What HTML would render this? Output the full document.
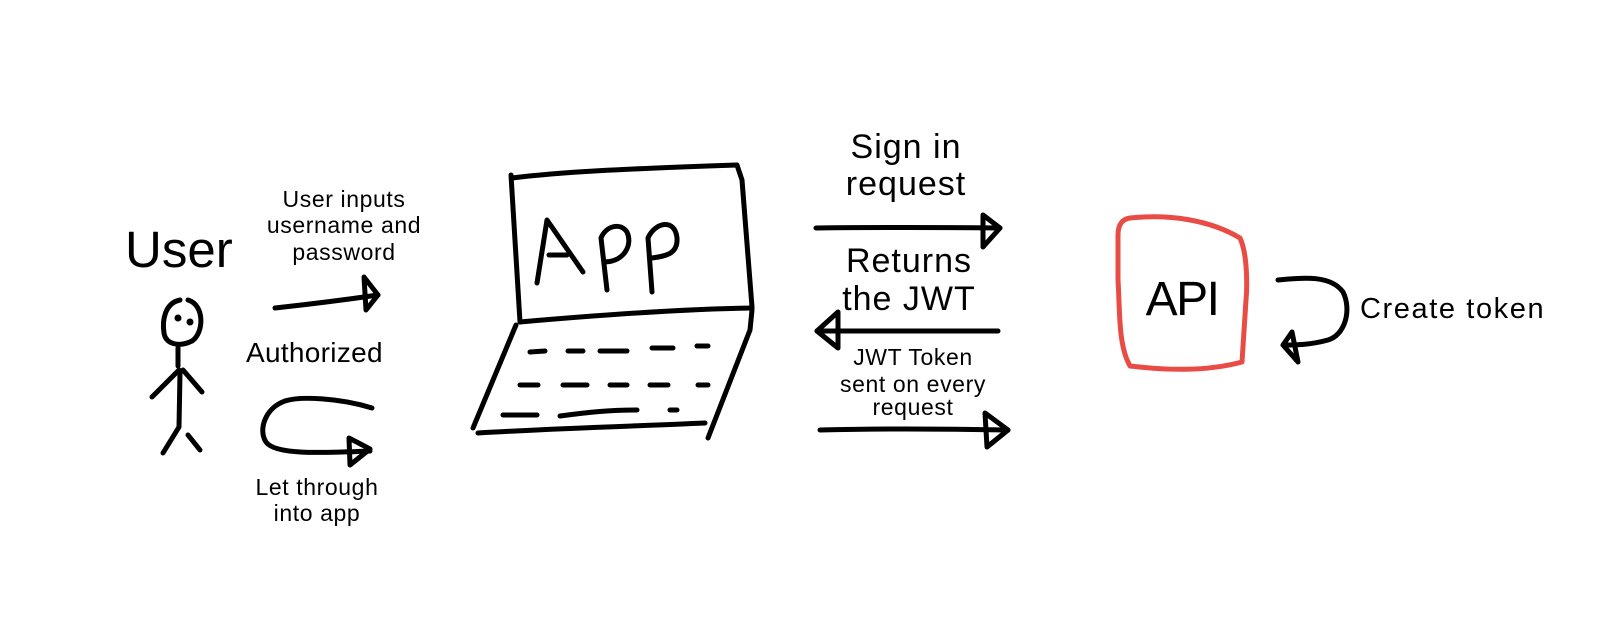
<!DOCTYPE html>
<html><head><meta charset="utf-8"><style>
html,body{margin:0;padding:0;background:#fff;width:1614px;height:628px;overflow:hidden}
svg{display:block}
text{font-family:"Liberation Sans",sans-serif;fill:#000}
</style></head><body>
<svg width="1614" height="628" viewBox="0 0 1614 628" xmlns="http://www.w3.org/2000/svg">
<g fill="none" stroke="#000" stroke-width="5" stroke-linecap="round" stroke-linejoin="round">
<!-- stick figure -->
<path d="M180,300 C165,303 162,320 164,333 C166,345 180,347 192,341 C204,333 205,305 188,300"/>
<path d="M178,348 L178,366"/>
<path d="M180,373 L179,427 L163,453"/>
<path d="M179,370 L152,397"/>
<path d="M183,370 L202,392"/>
<path d="M188,435 L200,450"/>
<!-- arrow 1 -->
<path d="M275,308 Q330,302 378,295"/>
<path d="M364,277 L378,295 L366,310 Z"/>
<!-- loop arrow -->
<path d="M372,408 C340,398 300,396 285,401 C265,408 258,430 266,442 C275,455 320,453 370,451"/>
<path d="M349,438 L370,449 L350,465 Z"/>
<!-- laptop -->
<path d="M511,175 L520,322"/>
<path d="M512,178 C560,172 620,169 737,165 L742,180 L752,307"/>
<path d="M520,322 C600,315 680,309 752,308"/>
<path d="M516,325 L473,428"/>
<path d="M752,310 L750,330 L708,438"/>
<path d="M478,433 C560,428 640,426 705,423"/>
<!-- APP letters -->
<path d="M537,283 L547,220 L583,272 M549,255 L567,255"/>
<path d="M607,290 L601,238 C606,226 620,222 627,232 C633,245 624,262 604,262"/>
<path d="M652,292 L648,238 C655,222 675,218 677,238 C678,254 666,256 652,258"/>
<!-- keys -->
<path d="M530,352 L545,351 M568,351 L583,351 M600,351 L627,351 M652,348 L673,348 M697,346 L708,346"/>
<path d="M520,385 L538,385 M563,385 L587,385 M610,385 L627,385 M650,385 L668,385 M698,385 L708,385"/>
<path d="M503,415 L537,415 M560,416 C590,412 610,410 637,410 M670,410 L677,410"/>
<!-- right arrows -->
<path d="M816,228 Q900,227 1000,228"/>
<path d="M983,215 L1000,228 L983,247 Z"/>
<path d="M998,331 L817,331"/>
<path d="M838,312 L817,331 L838,348 Z"/>
<path d="M820,430 Q900,428 1008,430"/>
<path d="M985,413 L1008,430 L987,447 Z"/>
<!-- api loop -->
<path d="M1278,280 C1300,278 1330,274 1343,292 C1352,310 1345,335 1328,340 C1310,345 1295,345 1285,345"/>
<path d="M1292,332 L1283,345 L1298,362 Z"/>
</g>
<circle cx="178" cy="318" r="3.5" fill="#000"/>
<circle cx="190" cy="322" r="3.5" fill="#000"/>
<path d="M1130,218 C1170,214 1210,220 1240,238 C1248,255 1247,290 1246,300 L1242,362 C1205,372 1165,370 1130,366 C1118,345 1120,310 1118,280 L1118,235 C1118,225 1122,219 1130,218 Z" fill="none" stroke="#e84c45" stroke-width="5" stroke-linejoin="round"/>
<text x="125" y="267" font-size="51">User</text>
<g font-size="23" text-anchor="middle" letter-spacing="0.6">
<text x="344" y="207">User inputs</text>
<text x="344" y="233">username and</text>
<text x="344" y="260">password</text>
<text x="317" y="495">Let through</text>
<text x="317" y="521">into app</text>
<text x="913" y="365">JWT Token</text>
<text x="913" y="392">sent on every</text>
<text x="913" y="415">request</text>
</g>
<text x="246" y="362" font-size="28" letter-spacing="0.3">Authorized</text>
<g font-size="34" text-anchor="middle" letter-spacing="1">
<text x="906" y="158">Sign in</text>
<text x="906" y="195">request</text>
<text x="909" y="272">Returns</text>
<text x="909" y="310">the JWT</text>
</g>
<text x="1182" y="315" font-size="48" text-anchor="middle" letter-spacing="-1.5">API</text>
<text x="1360" y="318" font-size="29" letter-spacing="1.6">Create token</text>
</svg>
</body></html>
